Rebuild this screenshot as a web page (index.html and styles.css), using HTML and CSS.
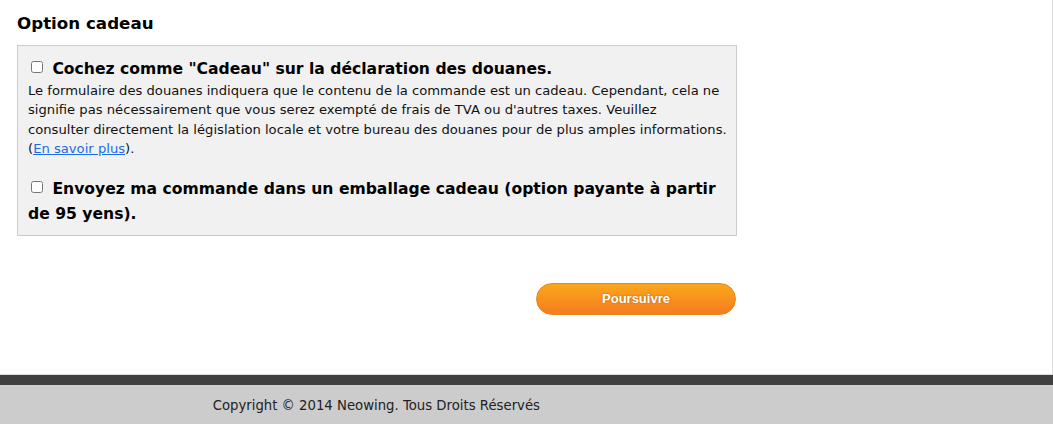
FILE: index.html
```html
<!DOCTYPE html>
<html lang="fr">
<head>
  <meta charset="UTF-8">
  <title>Option cadeau</title>
  <link rel="stylesheet" href="styles.css">
</head>
<body>

<div class="page">
  <div class="content">
    <h2>Option cadeau</h2>
    <div class="gift-box">
      <label class="option">
        <input type="checkbox"> Cochez comme "Cadeau" sur la déclaration des douanes.
      </label>
      <p class="note">Le formulaire des douanes indiquera que le contenu de la commande est un cadeau. Cependant, cela ne signifie pas nécessairement que vous serez exempté de frais de TVA ou d'autres taxes. Veuillez<br>consulter directement la législation locale et votre bureau des douanes pour de plus amples informations. (<a href="#">En savoir plus</a>).</p>
      <label class="option option-wrap">
        <input type="checkbox"> Envoyez ma commande dans un emballage cadeau (option payante à partir de 95 yens).
      </label>
    </div>
    <div class="actions">
      <button type="button" class="btn-next">Poursuivre</button>
    </div>
  </div>
</div>

<div class="footer">
  <div class="footer-text">Copyright &copy; 2014 Neowing. Tous Droits Réservés</div>
</div>

</body>
</html>
```

FILE: styles.css
```css
body {
  margin: 0;
  font-family: "DejaVu Sans", Verdana, sans-serif;
  color: #000;
  background: #fff;
}
.page {
  height: 375px;
  width: 1053px;
  border-right: 1px solid #ddd;
  border-bottom: 1px solid #ddd;
  box-sizing: border-box;
}
.content {
  width: 720px;
  padding: 13px 0 0 17px;
}
h2 {
  font-size: 16.7px;
  font-weight: bold;
  margin: 0 0 12px 0;
  line-height: 20px;
}
.gift-box {
  background-color: #f1f1f1;
  border: 1px solid #ccc;
  padding: 12px 6px 8px 10px;
}
.option {
  display: block;
  font-size: 15.6px;
  font-weight: bold;
  line-height: 23px;
}
.option input {
  margin: 0 4px 0 3px;
  width: 12px;
  height: 12px;
  vertical-align: 1px;
}
.option-wrap {
  line-height: 25px;
  padding-right: 10px;
}
.note {
  font-size: 13.15px;
  line-height: 19.4px;
  margin: 0 0 18px 0;
  color: #111;
}
.note a {
  color: #1a6ce8;
}
.actions {
  display: flex;
  justify-content: flex-end;
  margin-top: 47px;
  padding-right: 1px;
}
.btn-next {
  width: 200px;
  height: 32px;
  border-radius: 16px;
  border: 1px solid #e8851c;
  background: linear-gradient(#fba71a, #f47d20);
  color: #fff;
  font-family: "Liberation Sans", Arial, sans-serif;
  font-weight: bold;
  font-size: 13px;
  text-shadow: 0 0 2px rgba(120, 60, 0, 0.6);
  cursor: pointer;
}
.footer {
  border-top: 10px solid #404040;
  background-color: #ccc;
  height: 39px;
}
.footer-text {
  width: 540px;
  padding-top: 13px;
  text-align: right;
  font-size: 13.25px;
  color: #222;
}
```
